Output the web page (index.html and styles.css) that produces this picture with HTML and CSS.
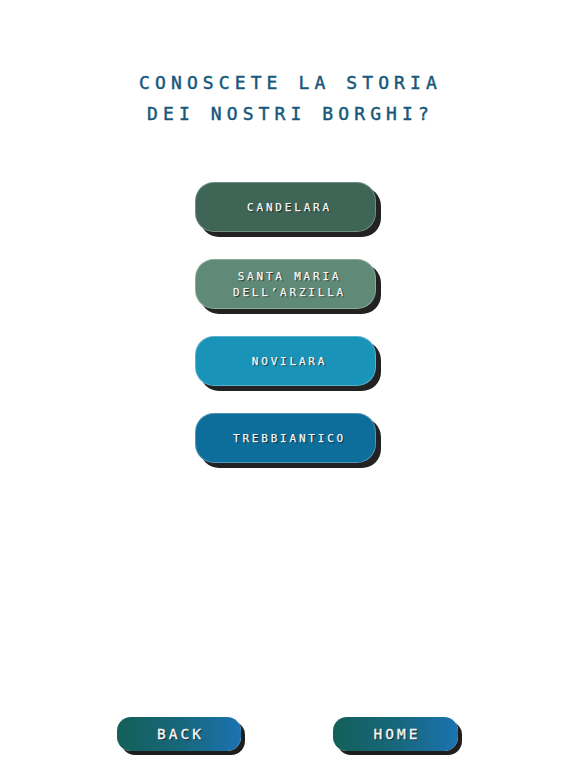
FILE: index.html
```html
<!DOCTYPE html>
<html lang="it">
<head>
<meta charset="utf-8">
<title>Borghi</title>
<link rel="stylesheet" href="styles.css">
</head>
<body>
<main class="page">
  <h1 class="title">CONOSCETE LA STORIA<br>DEI NOSTRI BORGHI?</h1>
  <nav class="list">
    <a class="pill pill-candelara" href="#"><span>CANDELARA</span></a>
    <a class="pill pill-santa" href="#"><span>SANTA MARIA<br>DELL’ARZILLA</span></a>
    <a class="pill pill-novilara" href="#"><span>NOVILARA</span></a>
    <a class="pill pill-trebbiantico" href="#"><span>TREBBIANTICO</span></a>
  </nav>
  <footer class="footer">
    <a class="nav-btn nav-back" href="#">BACK</a>
    <a class="nav-btn nav-home" href="#">HOME</a>
  </footer>
</main>
</body>
</html>
```
FILE: styles.css
```css
html, body {
  margin: 0;
  padding: 0;
  background: #ffffff;
}

.page {
  height: 768px;
  display: flex;
  flex-direction: column;
  align-items: center;
  font-family: "DejaVu Sans Mono", "Liberation Mono", monospace;
}

.title {
  margin: 67px 0 0 0;
  padding-left: 5px;
  font-size: 18px;
  line-height: 31px;
  font-weight: normal;
  letter-spacing: 5.1px;
  color: #17587a;
  -webkit-text-stroke: 0.45px #17587a;
  text-align: center;
}

.list {
  margin-top: 53px;
  display: flex;
  flex-direction: column;
  gap: 27px;
  align-items: center;
}

.pill {
  width: 181px;
  height: 50px;
  margin-right: 5px;
  box-sizing: border-box;
  border-radius: 19px;
  border: 1px solid rgba(255, 255, 255, 0.28);
  box-shadow: 5px 5px 0 #222222;
  display: flex;
  align-items: center;
  justify-content: center;
  padding: 2px 0 0 8px;
  text-decoration: none;
  color: #f7f7f7;
  font-size: 11px;
  line-height: 16px;
  letter-spacing: 2.8px;
  text-align: center;
  -webkit-text-stroke: 0.25px #f7f7f7;
  text-shadow: 1px 1px 1px rgba(0, 0, 0, 0.75);
}

.pill-candelara { background: #3e6556; }
.pill-santa { background: #5e8a77; }
.pill-novilara { background: #1a93b9; }
.pill-trebbiantico { background: #0e6e9b; }

.footer {
  margin-top: auto;
  padding-bottom: 17px;
  display: flex;
  gap: 92px;
  justify-content: center;
  padding-right: 2px;
}

.nav-btn {
  height: 34px;
  box-sizing: border-box;
  border-radius: 14px;
  background: linear-gradient(90deg, #135f58 0%, #17687f 55%, #1b73b1 100%);
  box-shadow: 4px 4px 0 #1e1e1e;
  display: flex;
  align-items: center;
  justify-content: center;
  padding-left: 4px;
  color: #f6f6f6;
  text-decoration: none;
  font-size: 14.5px;
  letter-spacing: 3px;
  -webkit-text-stroke: 0.35px #f6f6f6;
  text-shadow: 1px 1px 1px rgba(0, 0, 0, 0.7);
}

.nav-back { width: 124px; }
.nav-home { width: 125px; }
```
